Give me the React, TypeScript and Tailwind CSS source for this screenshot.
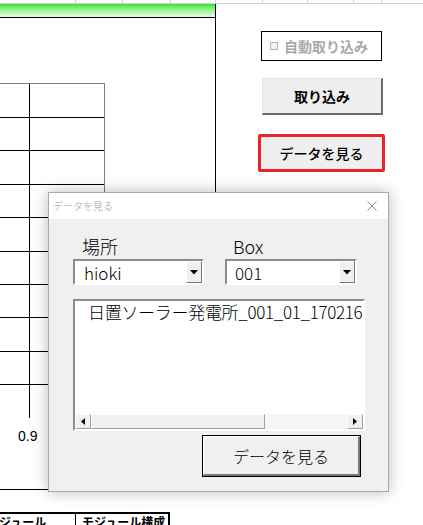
import React from "react";

const rowHeights = [34, 33, 34, 33, 34, 33, 33, 34, 33, 33];

function TriDown() {
  return (
    <svg width="8" height="5" viewBox="0 0 8 5">
      <path d="M0 0 L8 0 L4 4.5 Z" fill="#000" />
    </svg>
  );
}

export default function App() {
  return (
    <div className="relative w-[423px] h-[525px] overflow-hidden bg-white font-['Noto_Sans_CJK_JP',sans-serif] text-black">
      {/* top grid strip */}
      <div className="flex h-[4px] border-b border-[#d0d0d0]">
        <div className="w-[76px] border-r border-[#d0d0d0]" />
        <div className="w-[47px] border-r border-[#d0d0d0]" />
        <div className="w-[48px] border-r border-[#d0d0d0]" />
        <div className="w-[45px] border-r border-[#d0d0d0]" />
        <div className="w-[47px] border-r border-[#d0d0d0]" />
        <div className="w-[45px] border-r border-[#d0d0d0]" />
        <div className="w-[46px] border-r border-[#d0d0d0]" />
        <div className="w-[28px] border-r border-[#d0d0d0]" />
        <div className="flex-1" />
      </div>

      <div className="flex h-[486px]">
        {/* left sheet panel */}
        <div className="w-[216px] border-r border-b border-black flex flex-col">
          <div className="h-[14px] border-b border-black bg-linear-to-b from-[#1ee81e] to-[#eafbea]" />
          <div className="mt-[65px] w-[105px] border-t border-r border-[#808080]">
            {rowHeights.map((h, i) => (
              <div
                key={i}
                className={`grid grid-cols-[30px_74px] ${i < rowHeights.length - 1 ? "border-b border-black" : ""}`}
                style={{ height: h }}
              >
                <div className="border-r border-black" />
                <div />
              </div>
            ))}
          </div>
          <div className="mt-[10px] pl-[18px] text-[14px] leading-[16px] font-['Liberation_Sans',sans-serif]">0.9</div>
        </div>

        {/* right controls */}
        <div className="flex-1 flex flex-col pl-[45px]">
          <div className="mt-[27px] w-[121px] h-[30px] border border-black bg-white flex items-center pl-[8px] gap-[6px]">
            <div className="w-[8px] h-[8px] border border-[#b4b4b4] bg-[#f4f4f4]" />
            <span className="text-[14px] font-bold text-[#a8a8a8] leading-none">自動取り込み</span>
          </div>
          <div className="mt-[17px] ml-[1px] w-[121px] h-[37px] bg-[#efefef] border-t border-l border-[#e2e2e2] border-r-2 border-b-2 border-r-[#6a6a6a] border-b-[#6a6a6a] flex items-center justify-center">
            <span className="text-[14px] font-bold leading-none">取り込み</span>
          </div>
          <div className="mt-[19px] -ml-[3px] w-[127px] h-[38px] border-[3px] border-[#e8232a] rounded-[2px] bg-[#efefef] flex items-center justify-center">
            <span className="text-[14px] font-medium leading-none">データを見る</span>
          </div>
        </div>
      </div>

      {/* bottom header row */}
      <div className="mt-[22px] w-[170px] h-[20px] border-t-2 border-r-2 border-black grid grid-cols-[76px_1fr]">
        <div className="border-r border-black text-[12px] font-bold leading-[14px] pt-[1px] whitespace-nowrap overflow-hidden">
          <span className="-ml-[1px]">ジュール</span>
        </div>
        <div className="text-[12px] font-bold leading-[14px] pt-[1px] pl-[6px] whitespace-nowrap">モジュール構成</div>
      </div>

      {/* dialog */}
      <div className="absolute left-[48px] top-[192px] w-[341px] h-[300px] bg-[#f0f0f0] border border-[#a9a9a9] shadow-[0_0_14px_rgba(0,0,0,0.28)] flex flex-col font-light">
        <div className="h-[26px] bg-white flex items-center justify-between pl-[4px] pr-[11px]">
          <span className="text-[10px] text-[#a0a0a0] leading-none">データを見る</span>
          <svg width="10" height="10" viewBox="0 0 10 10">
            <path d="M0.5 0.5 L9.5 9.5 M9.5 0.5 L0.5 9.5" stroke="#8a8a8a" strokeWidth="1" />
          </svg>
        </div>
        <div className="flex flex-col pl-[24px] pt-[15px]">
          <div className="flex gap-[21px]">
            <div className="flex flex-col w-[131px]">
              <div className="h-[25px] leading-[25px] text-[18px] pl-[9px]">場所</div>
              <div className="h-[26px] border-2 border-t-[#8c8c8c] border-l-[#8c8c8c] border-b-white border-r-white bg-white flex items-center">
                <span className="flex-1 pl-[9px] text-[17px] leading-none">hioki</span>
                <div className="w-[16px] h-[22px] bg-[#f0f0f0] border border-t-white border-l-white border-r-[#7a7a7a] border-b-[#7a7a7a] flex items-center justify-center">
                  <TriDown />
                </div>
              </div>
            </div>
            <div className="flex flex-col w-[132px]">
              <div className="h-[25px] leading-[25px] text-[18px] pl-[8px]">Box</div>
              <div className="h-[26px] border-2 border-t-[#8c8c8c] border-l-[#8c8c8c] border-b-white border-r-white bg-white flex items-center">
                <span className="flex-1 pl-[8px] text-[17px] leading-none">001</span>
                <div className="w-[16px] h-[22px] bg-[#f0f0f0] border border-t-white border-l-white border-r-[#7a7a7a] border-b-[#7a7a7a] flex items-center justify-center">
                  <TriDown />
                </div>
              </div>
            </div>
          </div>

          {/* listbox */}
          <div className="mt-[14px] w-[292px] h-[132px] border-2 border-t-[#8c8c8c] border-l-[#8c8c8c] border-b-white border-r-white bg-white flex flex-col">
            <div className="flex-1 overflow-hidden whitespace-nowrap pl-[13px] text-[17px] leading-[22px] tracking-[-0.3px]">
              日置ソーラー発電所_001_01_170216
            </div>
            <div className="h-[15px] flex bg-[#f0f0f0]">
              <div className="w-[16px] border border-t-white border-l-white border-r-[#a0a0a0] border-b-[#a0a0a0] bg-[#f0f0f0] flex items-center justify-center">
                <svg width="4" height="7" viewBox="0 0 4 7">
                  <path d="M4 0 L4 7 L0 3.5 Z" fill="#000" />
                </svg>
              </div>
              <div className="w-[174px] border border-t-white border-l-white border-r-[#a0a0a0] border-b-[#a0a0a0] bg-[#f0f0f0]" />
              <div className="flex-1 bg-[#f5f5f5]" />
              <div className="w-[16px] border border-t-white border-l-white border-r-[#a0a0a0] border-b-[#a0a0a0] bg-[#f0f0f0] flex items-center justify-center">
                <svg width="4" height="7" viewBox="0 0 4 7">
                  <path d="M0 0 L0 7 L4 3.5 Z" fill="#000" />
                </svg>
              </div>
            </div>
          </div>

          <div className="w-[292px] flex justify-end pr-[4px] mt-[4px]">
            <div className="w-[159px] h-[42px] border border-black bg-[#f0f0f0] flex">
              <div className="flex-1 border border-t-white border-l-white border-r-[#7a7a7a] border-b-[#7a7a7a] border-b-2 border-r-2 flex items-center justify-center">
                <span className="text-[16px] leading-none">データを見る</span>
              </div>
            </div>
          </div>
        </div>
      </div>
    </div>
  );
}
